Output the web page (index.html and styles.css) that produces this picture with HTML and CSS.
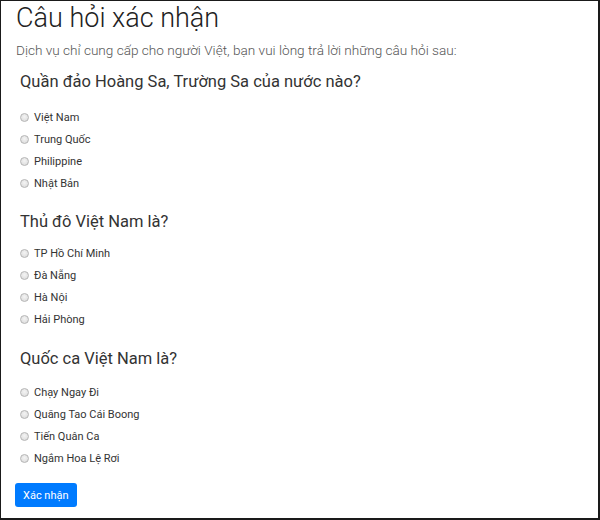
FILE: index.html
```html
<!DOCTYPE html>
<html lang="vi">
<head>
<meta charset="utf-8">
<link rel="stylesheet" href="styles.css">
</head>
<body>
<div class="frame">
  <h1 class="title">Câu hỏi xác nhận</h1>
  <p class="lead">Dịch vụ chỉ cung cấp cho người Việt, bạn vui lòng trả lời những câu hỏi sau:</p>

  <section class="q q1">
    <h2 class="q-title">Quần đảo Hoàng Sa, Trường Sa của nước nào?</h2>
    <ul class="opts">
      <li class="opt"><span class="radio"></span>Việt Nam</li>
      <li class="opt"><span class="radio"></span>Trung Quốc</li>
      <li class="opt"><span class="radio"></span>Philippine</li>
      <li class="opt"><span class="radio"></span>Nhật Bản</li>
    </ul>
  </section>

  <section class="q q2">
    <h2 class="q-title">Thủ đô Việt Nam là?</h2>
    <ul class="opts">
      <li class="opt"><span class="radio"></span>TP Hồ Chí Minh</li>
      <li class="opt"><span class="radio"></span>Đà Nẵng</li>
      <li class="opt"><span class="radio"></span>Hà Nội</li>
      <li class="opt"><span class="radio"></span>Hải Phòng</li>
    </ul>
  </section>

  <section class="q q3">
    <h2 class="q-title">Quốc ca Việt Nam là?</h2>
    <ul class="opts">
      <li class="opt"><span class="radio"></span>Chạy Ngay Đi</li>
      <li class="opt"><span class="radio"></span>Quăng Tao Cái Boong</li>
      <li class="opt"><span class="radio"></span>Tiến Quân Ca</li>
      <li class="opt"><span class="radio"></span>Ngắm Hoa Lệ Rơi</li>
    </ul>
  </section>

  <button class="btn">Xác nhận</button>
</div>
</body>
</html>
```
FILE: styles.css
```css
* { box-sizing: border-box; }
html, body { margin: 0; padding: 0; background: #fff; }
body { font-family: Roboto, "Open Sans", sans-serif; color: #333; }
.frame {
  width: 600px;
  height: 520px;
  border-left: 1px solid #1a1a1a;
  border-top: 1px solid #1a1a1a;
  border-right: 2px solid #1a1a1a;
  border-bottom: 2px solid #1a1a1a;
  padding: 0 0 0 15px;
  overflow: hidden;
}
.title {
  margin: 0;
  font-size: 27px;
  line-height: 34px;
  font-weight: 300;
  color: #222;
}
.lead {
  margin: 5px 0 0 0;
  font-size: 13.6px;
  line-height: 20px;
  font-weight: 300;
  color: #555;
}
.q { padding-left: 4px; }
.q-title {
  margin: 0;
  font-size: 16.5px;
  line-height: 24px;
  font-weight: 400;
  color: #333;
}
.q1 { margin-top: 10px; }
.q2 { margin-top: 16px; }
.q3 { margin-top: 17px; }
.opts {
  list-style: none;
  padding: 0;
  margin: 0;
}
.q1 .opts { margin-top: 12px; }
.q2 .opts { margin-top: 8px; }
.q3 .opts { margin-top: 10px; }
.opt {
  display: flex;
  align-items: center;
  gap: 5px;
  height: 22px;
  font-size: 11px;
  color: #333;
}
.radio {
  width: 9px;
  height: 9px;
  border-radius: 50%;
  border: 1px solid #b5b5b5;
  background: radial-gradient(circle at 50% 40%, #f4f4f4 0%, #d8d8d8 100%);
  flex: none;
}
.btn {
  margin: 14px 0 0 -1px;
  display: block;
  background: #007bff;
  color: #fff;
  border: none;
  border-radius: 3px;
  height: 24px;
  padding: 0 8px;
  font-family: inherit;
  font-size: 11px;
}
```
